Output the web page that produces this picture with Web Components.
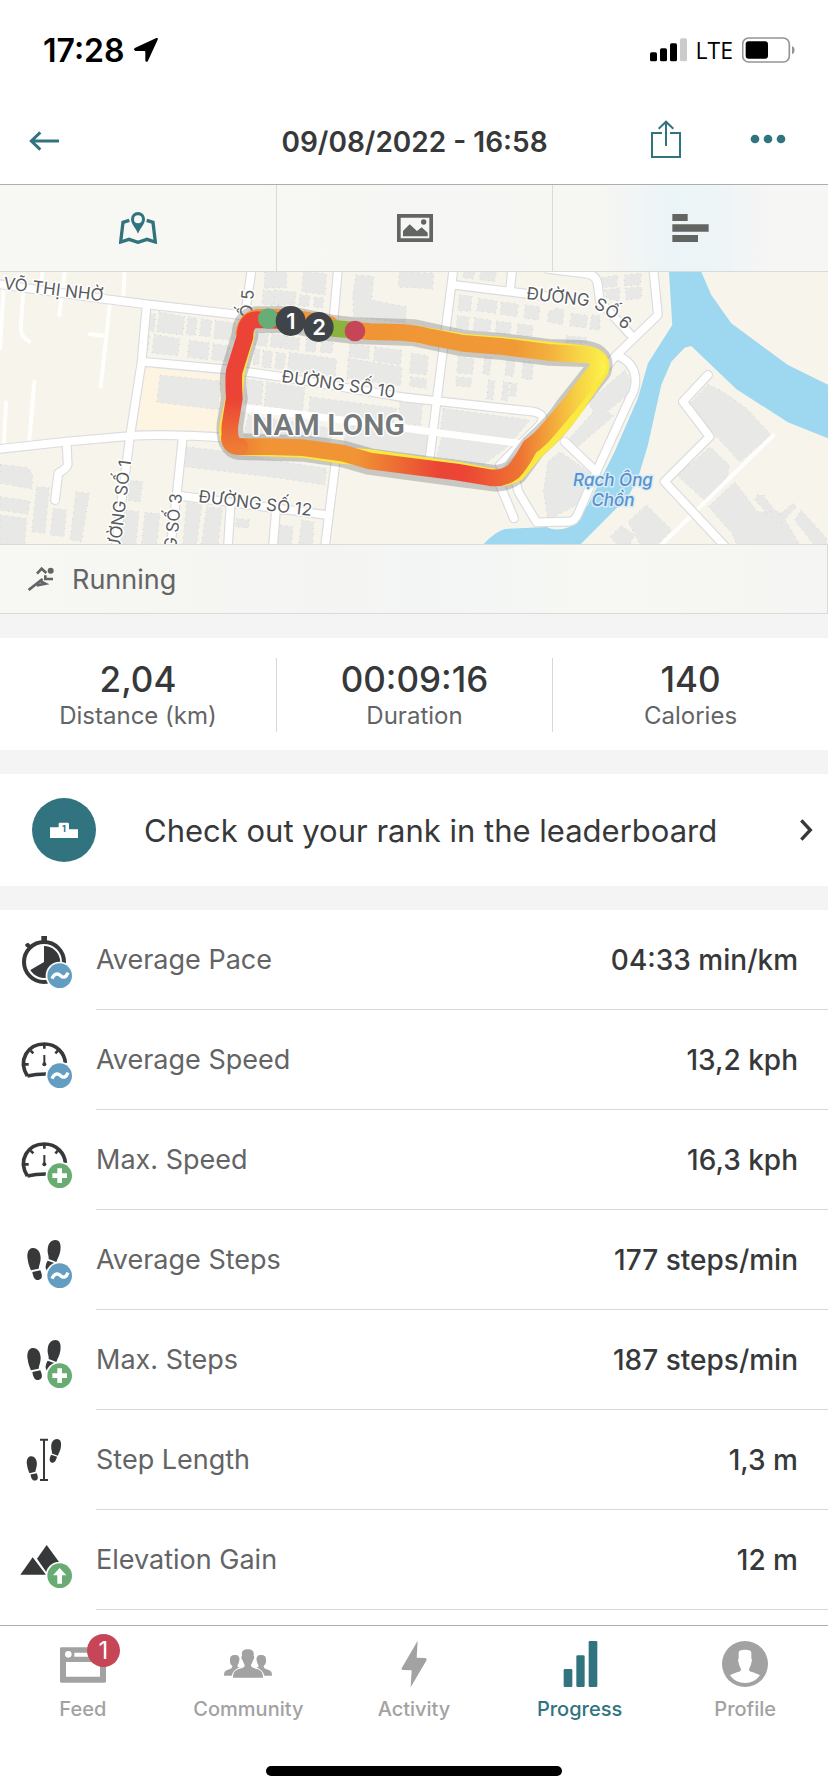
<!DOCTYPE html>
<html lang="en">
<head>
<meta charset="utf-8">
<meta name="viewport" content="width=device-width, initial-scale=1">
<title>Activity detail</title>
<style>
  body {
    --teal: #317480;
    --ink: #373839;
    --muted: #636465;
    --faint: #a2a2a2;
    --rule: #d8d8d8;
    margin: 0;
    min-height: 100vh;
    display: flex;
    flex-direction: column;
    background: #fff;
    color: var(--ink);
    font-family: Inter, Roboto, "Liberation Sans", sans-serif;
  }

  main {
    flex: 1;
  }

  .stats {
    display: grid;
    grid-template-columns: repeat(3, 1fr);
    padding: 20px 0 18px;
    border-top: 24px solid #f4f4f4;
    border-bottom: 24px solid #f4f4f4;
  }

  .metrics {
    border-top: 24px solid #f4f4f4;
  }
</style>
</head>
<body>
  <status-bar>17:28</status-bar>
  <page-header>09/08/2022 - 16:58</page-header>
  <main>
    <view-tabs></view-tabs>
    <route-map></route-map>
    <activity-type>Running</activity-type>
    <section class="stats">
      <stat-item label="Distance (km)">2,04</stat-item>
      <stat-item label="Duration">00:09:16</stat-item>
      <stat-item label="Calories">140</stat-item>
    </section>
    <leaderboard-link>Check out your rank in the leaderboard</leaderboard-link>
    <section class="metrics">
      <metric-row icon="pace" badge="average" value="04:33 min/km">Average Pace</metric-row>
      <metric-row icon="gauge" badge="average" value="13,2 kph">Average Speed</metric-row>
      <metric-row icon="gauge" badge="max" value="16,3 kph">Max. Speed</metric-row>
      <metric-row icon="steps" badge="average" value="177 steps/min">Average Steps</metric-row>
      <metric-row icon="steps" badge="max" value="187 steps/min">Max. Steps</metric-row>
      <metric-row icon="stride" value="1,3 m">Step Length</metric-row>
      <metric-row icon="mountain" badge="gain" value="12 m">Elevation Gain</metric-row>
    </section>
  </main>
  <tab-bar>
    <tab-item icon="feed" badge="1">Feed</tab-item>
    <tab-item icon="community">Community</tab-item>
    <tab-item icon="activity">Activity</tab-item>
    <tab-item icon="progress" active>Progress</tab-item>
    <tab-item icon="profile">Profile</tab-item>
  </tab-bar>

<script>
// Icon art is drawn on a 3x grid, so a 48px icon uses a 144 unit viewBox.
const FEET = {
  left: `<path d="M44 48C30 49 26 66 29 82C31 98 35 106 39 115L62 110C63 99 68 92 68 78C68 60 58 47 44 48Z"/>
    <path d="M43 120L67 115C72 126 76 141 62 144C50 146 45 134 43 120Z"/>`,
  right: `<path d="M112 24C126 24 130 38 127 56C125 71 119 78 115 90L92 81C93 70 88 66 89 52C90 36 98 24 112 24Z"/>
    <path d="M89 86L112 94C108 108 102 120 91 117C79 113 82 98 89 86Z"/>`
};

const METRIC_ICONS = {
  pace: `<circle cx="78" cy="90" r="60" fill="none" stroke="currentColor" stroke-width="12"/>
    <path d="M70 12H87V28H70ZM22 36L31 32L40 42L32 50L22 42Z"/>
    <path d="M78 90V42A48 48 0 1 1 37 114Z"/>`,
  gauge: `<path d="M28 132C-1 84 29 36 79 36C116 36 140 64 142 93M28 132Q52 126 84 126" fill="none" stroke="currentColor" stroke-width="11"/>
    <path d="M79 38V50M18 97H32M38 56L46 64M120 56L112 64" stroke="currentColor" stroke-width="8"/>
    <path d="M79 69V98" stroke="currentColor" stroke-width="6"/><circle cx="79" cy="97" r="6"/>`,
  steps: FEET.left + FEET.right,
  stride: `<g transform="translate(5 36) scale(.76)">${FEET.left}</g>
    <g transform="translate(32 3) scale(.76)">${FEET.right}</g>
    <path d="M66 23H90M66 144H90M78 23V144" fill="none" stroke="currentColor" stroke-width="6"/>`,
  mountain: '<path d="M44 76L84 128H7ZM86 39L126 94L89 126L57 80Z"/>'
};

const METRIC_BADGES = {
  average: ['#639ec2', '<path d="M102 140C109 124 119 123 128 131C137 139 145 136 150 122" fill="none" stroke="#fff" stroke-width="10"/>'],
  max: ['#68ac74', '<path d="M118 109H132V124H147V138H132V153H118V138H103V124H118Z" fill="#fff"/>'],
  gain: ['#68ac74', '<path d="M125 108L145 130H132V155H118V130H105Z" fill="#fff"/>']
};

const TAB_ICONS = {
  feed: '<path fill-rule="evenodd" d="M7 22H137Q141 22 141 26V124Q141 128 137 128H7Q3 128 3 124V26Q3 22 7 22ZM21 66V110H123V66ZM46 38V50H123V38ZM18 43A10 10 0 1 0 38 43A10 10 0 1 0 18 43Z"/>',
  community: `<path d="M71 28C85 28 91 34 89 47C92 50 90 59 87 61C86 68 81 72 81 76C81 83 89 84 99 87C112 91 117 98 117 113H27C27 98 32 91 45 87C55 84 62 83 62 76C62 72 57 68 56 61C52 58 51 50 54 47C52 34 57 28 71 28Z"/>
    <path d="M32 45C42 44 48 50 46 61C46 69 40 74 40 79Q41 82 46 82C33 88 26 96 23 107H0C0 97 2 93 10 90C19 87 26 84 25 78C19 73 17 68 18 60C17 50 22 45 32 45Z"/>
    <path d="M112 45C102 44 96 50 98 61C98 69 104 74 104 79Q103 82 98 82C111 88 118 96 121 107H144C144 97 142 93 134 90C125 87 118 84 119 78C125 73 127 68 126 60C127 50 122 45 112 45Z"/>`,
  activity: '<path d="M83 2L35 85Q34 90 38 90L65 91L62 142L110 60Q111 55 106 54L80 53Z"/>',
  progress: '<rect x="23" y="87" width="26" height="54" rx="4"/><rect x="61" y="46" width="25" height="95" rx="4"/><rect x="98" y="3" width="26" height="138" rx="4"/>',
  profile: `<circle cx="72" cy="72" r="69"/>
    <path fill="#fff" d="M72 29C82 29 91 31 91 38V55Q95 60 91 68C90 78 84 83 84 90C86 97 96 94 117 106Q101 129 72 129T27 106C48 94 58 97 60 90C60 83 54 78 53 68Q49 60 53 55V38C53 31 62 29 72 29Z"/>`
};

function template(html) {
  const el = document.createElement('template');
  el.innerHTML = html;
  return el;
}

class BaseElement extends HTMLElement {
  constructor() {
    super();
    this.attachShadow({ mode: 'open' });
    this.shadowRoot.appendChild(this.constructor.template.content.cloneNode(true));
  }
}

class StatusBar extends BaseElement {
  static template = template(`
    <style>
      :host {
        display: flex;
        align-items: center;
        justify-content: space-between;
        height: 94px;
        padding: 3px 33px 0 43px;
        color: #000;
        font-size: 32px;
        font-weight: 600;
      }

      div {
        display: flex;
        align-items: center;
        gap: 9px;
      }

      .network {
        font-family: "Open Sans", "Noto Sans", sans-serif;
        font-size: 23px;
        font-weight: 500;
      }
    </style>
    <div>
      <slot></slot>
      <svg width="24" height="24" viewBox="0 0 72 72"><path d="M67 0L4 29Q-4 34 4 39L31 39Q34 39 34 42V68Q38 75 42 68L71 5Q73-1 67 0Z"/></svg>
    </div>
    <div>
      <svg width="37" height="24" viewBox="0 0 111 72">
        <rect y="43" width="21" height="27" rx="5"/><rect x="30" y="31" width="21" height="39" rx="5"/>
        <rect x="60" y="16" width="21" height="54" rx="5"/><rect x="90" y="1" width="21" height="69" rx="5" fill="#cbcbcb"/>
      </svg>
      <span class="network">LTE</span>
      <svg width="53" height="26" viewBox="0 0 159 78">
        <rect x="2" y="3" width="140" height="72" rx="18" fill="none" stroke="#949494" stroke-width="5"/>
        <rect x="11" y="13" width="67" height="52" rx="9"/>
        <path d="M150 27Q158 30 158 39T150 52Z" fill="#949494"/>
      </svg>
    </div>
  `);
}

class PageHeader extends BaseElement {
  static template = template(`
    <style>
      :host {
        display: grid;
        grid-template-columns: 1fr auto 1fr;
        align-items: center;
        height: 87px;
        padding: 0 42px 0 29px;
        border-bottom: 1px solid #aeaeae;
        color: var(--teal);
      }

      h1 {
        margin: 0;
        padding: 2px 0 0 14px;
        color: var(--ink);
        font-size: 28px;
        font-weight: 600;
      }

      a, button, svg {
        display: block;
      }

      a, button {
        color: inherit;
      }

      button {
        padding: 0;
        border: 0;
        background: none;
      }

      .actions {
        display: flex;
        align-items: center;
        justify-content: flex-end;
        gap: 69px;
      }
    </style>
    <a href="#activities" aria-label="Back">
      <svg width="30" height="20" viewBox="0 0 90 60" fill="none" stroke="currentColor" stroke-width="9"><path d="M90 30H7M34 4L7 30L34 56"/></svg>
    </a>
    <h1><slot></slot></h1>
    <div class="actions">
      <button aria-label="Share">
        <svg width="30" height="42" viewBox="0 0 90 126" fill="none" stroke="currentColor" stroke-width="6"><path d="M33 39H3V111H87V39H57M45 78V5M23 26L45 5L67 26"/></svg>
      </button>
      <button aria-label="More">
        <svg width="36" height="16" viewBox="0 0 108 48" fill="currentColor"><circle cx="15" cy="18" r="13"/><circle cx="54" cy="18" r="13"/><circle cx="93" cy="18" r="13"/></svg>
      </button>
    </div>
  `);
}

class ViewTabs extends BaseElement {
  static template = template(`
    <style>
      :host {
        display: grid;
        grid-template-columns: repeat(3, 1fr);
        height: 86px;
        border-bottom: 1px solid #dadbd9;
        background: linear-gradient(90deg, #f7f8f3 30%, #f6f6f4 50%, #f6f6f3 73%, #ebf4f7 81%, #eff5f6 88%, #f6f6f4 93%);
      }

      button {
        display: flex;
        align-items: center;
        justify-content: center;
        padding: 0;
        border: 0;
        background: none;
        color: #636563;
      }

      button + button {
        border-left: 1px solid #dadbd9;
      }

      [aria-pressed="true"] {
        color: var(--teal);
      }
    </style>
    <button aria-label="Map" aria-pressed="true">
      <svg width="38" height="32" viewBox="0 0 114 96">
        <path d="M31 25L12 31L5 90L30 82L57 91L84 82L109 90L102 31L83 25" fill="none" stroke="currentColor" stroke-width="10"/>
        <path fill="currentColor" fill-rule="evenodd" d="M57 65C51 48 36 37 36 21A21 21 0 0 1 78 21C78 37 63 48 57 65ZM45 22A12 12 0 1 0 69 22A12 12 0 1 0 45 22Z"/>
      </svg>
    </button>
    <button aria-label="Photos">
      <svg width="36" height="28" viewBox="0 0 108 84" fill="currentColor">
        <path fill-rule="evenodd" d="M0 0H108V84H0ZM11 11V73H97V11Z"/>
        <circle cx="80" cy="24" r="8"/>
        <path d="M18 67V51L38 31L60 51L74 40L92 56V67Z"/>
      </svg>
    </button>
    <button aria-label="Splits">
      <svg width="37" height="28" viewBox="0 0 111 84" fill="currentColor"><path d="M1 0H47V21H1ZM1 31H110V53H1ZM1 63H78V84H1Z"/></svg>
    </button>
  `);
}

class RouteMap extends BaseElement {
  static template = template(`
    <style>
      :host {
        display: block;
        background: #f6f4eb;
      }

      svg {
        display: block;
        width: 100%;
      }

      .water {
        fill: #9dd7f0;
      }

      .buildings {
        fill: #e8e8e6;
        stroke: #b4b4b1;
        stroke-width: 2;
        stroke-dasharray: 2 17;
      }

      .roads, .lanes, .route {
        fill: none;
        stroke-linecap: round;
        stroke-linejoin: round;
      }

      .casing {
        stroke: #dbdcde;
        stroke-width: 30;
      }

      .surface {
        stroke: #fff;
        stroke-width: 23;
      }

      .lanes {
        stroke: #fefefd;
        stroke-width: 12;
      }

      .route {
        stroke-width: 50;
      }

      text {
        font-size: 17px;
        fill: #595b5d;
        stroke: #fff;
        stroke-width: 3px;
        stroke-linejoin: round;
        paint-order: stroke;
      }

      .district {
        font-family: Roboto, sans-serif;
        font-size: 30px;
        font-weight: 600;
        fill: #74797b;
      }

      .river {
        font-style: italic;
        font-weight: 500;
        fill: #5b8fce;
        stroke: #d6ecf4;
        text-anchor: middle;
      }

      .split {
        font-size: 22px;
        font-weight: 600;
        fill: #fff;
        stroke: none;
        text-anchor: middle;
      }
    </style>
    <svg viewBox="0 0 828 272" role="img" aria-label="Route map">
      <defs>
        <linearGradient id="west" gradientUnits="userSpaceOnUse" x1="0" y1="400" x2="0" y2="550">
          <stop stop-color="#eb4335"/><stop offset="1" stop-color="#ee7c34"/>
        </linearGradient>
        <linearGradient id="south" gradientUnits="userSpaceOnUse" x1="688" y1="0" x2="1808" y2="0">
          <stop stop-color="#ee7833"/><stop offset=".1" stop-color="#f09435"/><stop offset=".34" stop-color="#f09435"/>
          <stop offset=".44" stop-color="#ed7033"/><stop offset=".56" stop-color="#eb4535"/><stop offset=".63" stop-color="#ec4535"/>
          <stop offset=".78" stop-color="#ee7533"/><stop offset=".85" stop-color="#f2a03a"/><stop offset=".93" stop-color="#f7d043"/>
          <stop offset="1" stop-color="#fcf04b"/>
        </linearGradient>
        <linearGradient id="north" gradientUnits="userSpaceOnUse" x1="1000" y1="0" x2="1808" y2="0">
          <stop stop-color="#8cb43c"/><stop offset=".06" stop-color="#8cb43c"/><stop offset=".1" stop-color="#f09435"/>
          <stop offset=".68" stop-color="#f09a36"/><stop offset=".8" stop-color="#f3b03d"/><stop offset=".92" stop-color="#f8d846"/>
          <stop offset="1" stop-color="#fbec4a"/>
        </linearGradient>
        <path id="roads" d="M-20 55L300 100L440 118L740 152M440 118L425 290L390 515L345 860M-20 554L200 530L390 513Q500 505 700 520
          M425 290L700 315L840 335L1210 397L1310 408L1600 440Q1650 450 1610 490L1500 600M757 0L735 150
          M200 535L203 600Q202 608 175 625L165 705M548 520L530 690L510 860M535 692L690 712L980 750M692 715L683 860M828 735L818 860
          M1015 0L1000 170M1007 590L973 860M1362 0L1330 250L1310 408L1288 590M1365 60L1530 80L1640 94M1538 0L1530 78
          M1644 12L1754 25Q1788 28 1793 55L1800 110L1890 207M1959 0L1974 150L1850 270L1780 350
          M1860 275Q1910 300 1906 355Q1904 380 1890 400L1794 610L1735 745Q1725 770 1705 770L1610 772L1555 680L1545 640
          M1694 530L1789 620M1500 660L1542 760M2124 330L2049 410L2129 515L1994 650L2190 860"/>
        <path id="street6" d="M526 27L586 34Q604 37 630 63"/>
      </defs>

      <g transform="translate(0 -7) scale(.3333)">
        <path fill="#fdf4e2" d="M430 305L680 335L660 500L408 495Z"/>
        <path class="water" d="M2006 0L2017 180L1944 295L1914 400L1844 560L1764 720L1710 785Q1670 802 1640 786L1515 792Q1480 802 1440 850H1730
          L1884 695L1914 640L1944 540L1964 450L1984 360L2014 290L2054 248L2074 243L2209 372L2364 472L2490 522V362L2364 300L2194 175L2134 90L2095 0Z"/>
        <g class="buildings">
          <path d="M478 140L555 155L548 210L470 200ZM445 145L468 148L462 200L440 195ZM565 155L592 160L586 212L558 208ZM604 162L636 166L630 216L598 212ZM646 166L710 175L704 226L640 220
            M462 208L540 222L534 272L456 265ZM568 225L628 234L624 285L562 276ZM640 236L690 243L684 290L634 284ZM436 208L450 210L444 255L432 253Z"/>
          <path d="M480 330L662 348L655 434L470 412Z"/>
          <path d="M795 20H860V68L792 70ZM790 75L850 82L845 125L786 118ZM770 200L806 206L800 245L764 240ZM815 205L860 212L854 250L810 246ZM764 250L780 252L776 300L758 298ZM790 256L818 260L812 310L786 306Z"/>
          <path d="M742 342L790 350L784 420L736 415ZM800 350L915 368L908 440L792 422ZM745 450L1000 490L990 550L900 530L730 515Z"/>
          <path d="M910 20L980 26L975 90L905 80ZM825 75L890 82L884 120L820 118ZM1068 30L1122 34L1115 105L1220 125L1216 175L1060 155L1058 90ZM1198 20L1302 24L1298 72L1195 66ZM900 90L930 92L926 125L896 122ZM944 96L972 98L968 130L940 126Z"/>
          <path d="M830 262L858 266L852 315L824 310ZM868 262L1010 282L1006 335L862 318ZM1045 280L1206 305L1202 362L1040 340ZM930 395L1190 430L1180 480L925 455ZM1200 405L1268 414L1262 482L1195 474ZM1235 265L1285 272L1280 330L1228 324ZM1232 335L1280 342L1278 370L1228 364ZM860 215L900 220L896 256L856 252ZM920 220L950 224L946 262L916 258ZM965 226L1000 232L996 265L960 262ZM1050 236L1110 244L1106 282L1046 276ZM1125 246L1206 256L1202 300L1120 288Z"/>
          <path d="M1040 480L1285 508L1275 580L1150 560L1030 545Z"/>
          <path d="M1378 90L1416 94L1412 140L1374 136ZM1436 100L1492 108L1488 145L1430 138ZM1505 110L1556 118L1550 155L1500 148ZM1576 120L1620 126L1616 165L1572 160ZM1372 152L1408 156L1404 196L1368 192ZM1424 158L1474 166L1470 200L1420 196ZM1490 168L1535 174L1530 208L1486 204ZM1554 176L1600 182L1596 215L1550 210ZM1392 20H1425L1420 42L1388 38ZM1442 20H1490L1484 50L1438 44Z"/>
          <path d="M1375 275L1422 282L1418 328L1370 324ZM1370 335L1416 340L1412 366L1366 362ZM1455 275L1475 278L1468 330L1448 326ZM1520 285L1545 288L1540 335L1514 330ZM1570 290L1600 294L1596 345L1565 340ZM1465 345L1485 348L1478 405L1460 402ZM1510 350L1528 352L1522 408L1504 406ZM1532 354L1552 356L1546 395L1528 392Z"/>
          <path d="M1330 430L1590 465L1540 525L1320 500ZM1325 515L1530 540L1450 600L1310 575Z"/>
          <path d="M1670 130L1692 134L1688 180L1644 170V140ZM1715 145L1764 152L1758 190L1708 182ZM1776 150L1800 152V195L1768 192ZM1700 212L1760 218V235L1696 232ZM1806 38L1854 30L1850 65L1805 68ZM1874 30L1925 24L1922 60L1872 62ZM1814 75L1860 68L1858 110L1820 100ZM1876 70L1926 65L1924 100L1880 106Z"/>
          <path d="M1875 315L1895 350L1890 385L1820 440L1842 452L1725 552L1700 530L1780 440L1765 410ZM1644 590L1680 560L1780 630L1730 720L1644 765L1630 680Z"/>
          <path d="M560 545L690 560L850 590L980 610L975 660L840 640L555 605ZM0 598L85 608L98 630L96 672L0 655ZM110 665L148 668L135 805L95 800ZM228 680L268 685L245 830L210 825ZM0 695L90 708L84 748L0 736ZM0 750L80 760L74 838H0ZM160 730L200 735L192 815L150 810ZM390 645L428 650L420 712L384 706ZM378 735L417 740L408 838H362ZM435 742L480 746L470 838H424Z"/>
          <path d="M560 712L606 718L590 838H548ZM620 725L668 730L655 838H604ZM840 780L880 785L875 838H832ZM905 765L942 770L938 838H896ZM708 760L750 765L744 790L706 785Z"/>
          <path d="M2124 358L2170 380L2240 430L2314 510L2220 592L2150 515L2068 418ZM2080 590L2130 545L2188 600L2184 632L2118 710L2024 625ZM2205 650L2272 740L2340 740L2400 838H2210L2196 805L2125 725ZM2272 690L2290 690L2336 750L2380 715L2390 726L2344 774L2330 774L2264 705ZM2404 735L2480 820V838H2440L2384 765ZM1940 720L2015 795L1975 838H1920L1884 770ZM1865 782L1904 810L1890 838H1850L1830 815Z"/>
        </g>
        <path class="lanes" d="M130 0L122 60M197 0L178 150M375 0L370 90M330 115L302 365M270 207L318 213M70 75L62 190Q62 215 88 230M12 50L0 250M103 350L88 525M18 412L12 535M2319 512L1984 840"/>
        <g class="roads">
          <use href="#roads" class="casing"/>
          <use href="#roads" class="surface"/>
          <path d="M730 430L850 442L1190 487L1555 535" stroke="#fff" stroke-width="21"/>
        </g>
      </g>

      <text x="3" y="17" transform="rotate(7 3 17)">VÕ THỊ NHỜ</text>
      <text x="281" y="110" transform="rotate(8 281 110)">ĐƯỜNG SỐ 10</text>
      <text x="198" y="230" transform="rotate(7 198 230)">ĐƯỜNG SỐ 12</text>
      <text><textPath href="#street6">ĐƯỜNG SỐ 6</textPath></text>
      <text x="131" y="189" transform="rotate(-83 131 189)" text-anchor="end">ĐƯỜNG SỐ 1</text>
      <text x="182" y="222" transform="rotate(-84 182 222)" text-anchor="end">ĐƯỜNG SỐ 3</text>
      <text x="254" y="18" transform="rotate(-86 254 18)" text-anchor="end">Ố 5</text>

      <g transform="translate(0 -7) scale(.3333)" class="route">
        <path stroke="#777" stroke-opacity=".36" stroke-width="80" d="M1065 197L1240 203L1390 235L1510 245L1644 262L1740 265Q1810 268 1795 315L1704 430Q1670 485 1600 545L1545 620Q1510 645 1470 638L1370 625L1110 590L1030 567L910 550L720 545Q686 542 690 480L703 400Q694 330 704 315L735 210Q735 165 770 164L870 164L1000 190Z"/>
        <path stroke="#fbe93f" d="M1240 206L1390 231L1510 241L1740 265Q1812 268 1802 315L1717 440Q1672 502 1611 554L1550 625Q1510 645 1470 634L1370 615L1110 578L1030 572L910 553L720 546Q676 542 684 480L702 400L710 315L739 210"/>
        <path stroke="#f09435" d="M990 178L870 157L775 157Q738 162 732 205"/>
        <path stroke="url(#north)" d="M1000 190L1110 200L1200 202Q1240 203 1290 216L1390 235L1510 245L1644 262L1740 268Q1806 268 1795 308"/>
        <path stroke="url(#south)" d="M688 520Q690 545 720 545L810 545L910 548L1030 565L1110 588L1250 606L1370 621L1470 638Q1510 643 1540 620Q1560 600 1590 545Q1620 525 1644 495L1704 425L1795 308"/>
        <path stroke="url(#west)" d="M870 168L800 165L770 164Q735 166 735 215L704 315Q699 330 703 400L690 480Q684 542 720 545"/>
        <g stroke="none">
          <circle cx="805" cy="161" r="31" fill="#69ad76"/>
          <circle cx="872" cy="168" r="45" fill="#3f4448"/>
          <circle cx="956" cy="186" r="45" fill="#3f4448"/>
          <circle cx="1065" cy="198" r="31" fill="#c64658"/>
        </g>
      </g>

      <text class="split" x="291" y="57">1</text>
      <text class="split" x="319" y="63">2</text>
      <text class="district" x="252" y="163">NAM LONG</text>
      <text class="river" x="613" y="214">Rạch Ông</text>
      <text class="river" x="613" y="234">Chồn</text>
    </svg>
  `);
}

class ActivityType extends BaseElement {
  static template = template(`
    <style>
      :host {
        display: flex;
        align-items: center;
        gap: 18px;
        height: 68px;
        padding-left: 28px;
        border: solid #dadbd9;
        border-width: 1px 1px 1px 0;
        background: linear-gradient(90deg, #f7f7f3, #f5f5f3 35%, #f3f6f5 57%, #f7f8f3 72%, #f5f5f3);
        color: var(--muted);
        font-size: 27px;
      }
    </style>
    <svg width="26" height="24" viewBox="0 0 78 72" fill="none" stroke="currentColor" stroke-width="8">
      <circle cx="68" cy="11" r="9" fill="currentColor" stroke="none"/>
      <path d="M27 20L41 5L55 18M52 25L52 36H75M2 69L36 42L52 50L26 55M36 42L44 36"/>
    </svg>
    <slot></slot>
  `);
}

class StatItem extends BaseElement {
  static template = template(`
    <style>
      :host {
        display: block;
        text-align: center;
        color: var(--ink);
        font-size: 35px;
        font-weight: 500;
        line-height: 42px;
      }

      :host(:not(:first-child)) {
        border-left: 1px solid var(--rule);
      }

      .label {
        display: block;
        color: var(--muted);
        font-size: 24px;
        font-weight: 400;
        line-height: 32px;
      }
    </style>
    <slot></slot>
    <span class="label"></span>
  `);

  connectedCallback() {
    this.shadowRoot.querySelector('.label').textContent = this.getAttribute('label');
  }
}

class LeaderboardLink extends BaseElement {
  static template = template(`
    <style>
      :host {
        display: block;
      }

      a {
        display: flex;
        align-items: center;
        height: 112px;
        padding: 0 15px 0 32px;
        color: var(--ink);
        font-size: 31px;
        text-decoration: none;
      }

      .label {
        flex: 1;
        margin-left: 48px;
      }

      text {
        font-size: 27px;
        font-weight: 700;
      }
    </style>
    <a href="#leaderboard">
      <svg width="64" height="64" viewBox="0 0 192 192">
        <circle cx="96" cy="96" r="96" fill="#317480"/>
        <path d="M54 88H80V78Q80 74 84 74H107Q111 74 111 78V94H138V120H54Z" fill="#fff"/>
        <text x="96" y="103" text-anchor="middle" fill="#317480">1</text>
      </svg>
      <span class="label"><slot></slot></span>
      <svg width="14" height="24" viewBox="0 0 42 72" fill="none" stroke="currentColor" stroke-width="10"><path d="M7 7L34 36L7 65"/></svg>
    </a>
  `);
}

class MetricRow extends BaseElement {
  static template = template(`
    <style>
      :host {
        display: flex;
        align-items: center;
        gap: 22px;
        height: 100px;
        padding-left: 18px;
        font-size: 27px;
      }

      .icon {
        color: var(--ink);
        fill: currentColor;
      }

      .text {
        flex: 1;
        display: flex;
        align-items: center;
        justify-content: space-between;
        height: 99px;
        padding-right: 30px;
        border-bottom: 1px solid var(--rule);
        color: var(--muted);
      }

      .value {
        color: var(--ink);
        font-size: 28px;
        font-weight: 500;
      }
    </style>
    <svg class="icon" width="56" height="56" viewBox="0 0 168 168"></svg>
    <div class="text">
      <slot></slot>
      <span class="value"></span>
    </div>
  `);

  connectedCallback() {
    let art = METRIC_ICONS[this.getAttribute('icon')];
    const badge = METRIC_BADGES[this.getAttribute('badge')];
    if (badge) {
      art += `<circle cx="125" cy="131" r="42" fill="#fff"/><circle cx="125" cy="131" r="37" fill="${badge[0]}"/>${badge[1]}`;
    }
    this.shadowRoot.querySelector('.icon').innerHTML = art;
    this.shadowRoot.querySelector('.value').textContent = this.getAttribute('value');
  }
}

class TabBar extends BaseElement {
  static template = template(`
    <style>
      :host {
        display: block;
        padding: 14px 0 16px;
        border-top: 1px solid #aeaeae;
        background: #fff;
      }

      nav {
        display: flex;
      }

      .home {
        width: 296px;
        height: 10px;
        margin: 45px auto 0;
        border-radius: 5px;
        background: #000;
      }
    </style>
    <nav><slot></slot></nav>
    <div class="home"></div>
  `);
}

class TabItem extends BaseElement {
  static template = template(`
    <style>
      :host {
        flex: 1;
        color: var(--faint);
        font-size: 20px;
        font-weight: 500;
        line-height: 24px;
      }

      :host([active]) {
        color: var(--teal);
      }

      a {
        display: flex;
        flex-direction: column;
        align-items: center;
        gap: 9px;
        color: inherit;
        text-decoration: none;
      }

      .icon {
        position: relative;
        height: 48px;
      }

      svg {
        display: block;
        fill: currentColor;
      }

      .badge {
        position: absolute;
        top: -6px;
        right: -13px;
        width: 33px;
        height: 33px;
        border-radius: 50%;
        background: #c64658;
        color: #fff;
        font-size: 24px;
        font-weight: 400;
        line-height: 33px;
        text-align: center;
      }
    </style>
    <a>
      <span class="icon"><svg width="48" height="48" viewBox="0 0 144 144"></svg></span>
      <slot></slot>
    </a>
  `);

  connectedCallback() {
    const icon = this.getAttribute('icon');
    const link = this.shadowRoot.querySelector('a');
    link.href = '#' + icon;
    if (this.hasAttribute('active')) {
      link.setAttribute('aria-current', 'page');
    }
    this.shadowRoot.querySelector('svg').innerHTML = TAB_ICONS[icon];

    if (this.hasAttribute('badge')) {
      const badge = document.createElement('span');
      badge.className = 'badge';
      badge.textContent = this.getAttribute('badge');
      this.shadowRoot.querySelector('.icon').appendChild(badge);
    }
  }
}

customElements.define('status-bar', StatusBar);
customElements.define('page-header', PageHeader);
customElements.define('view-tabs', ViewTabs);
customElements.define('route-map', RouteMap);
customElements.define('activity-type', ActivityType);
customElements.define('stat-item', StatItem);
customElements.define('leaderboard-link', LeaderboardLink);
customElements.define('metric-row', MetricRow);
customElements.define('tab-bar', TabBar);
customElements.define('tab-item', TabItem);
</script>
</body>
</html>
